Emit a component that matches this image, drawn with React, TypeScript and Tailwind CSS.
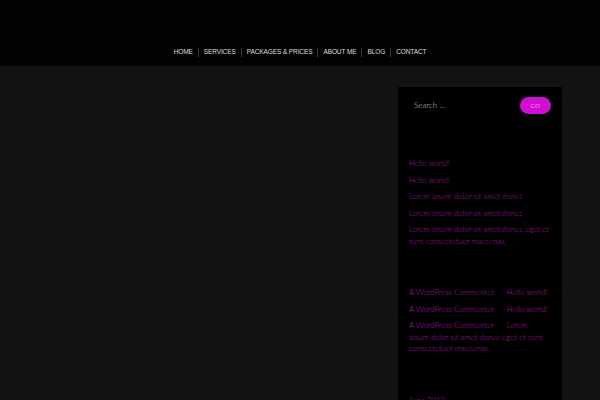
import React from "react";

const navItems = ["HOME", "SERVICES", "PACKAGES & PRICES", "ABOUT ME", "BLOG", "CONTACT"];

export default function App() {
  return (
    <div className="w-[600px] h-[400px] overflow-hidden bg-[#121212]" style={{ fontFamily: "Lato, 'Liberation Sans', sans-serif" }}>
      <header className="h-[66px] bg-[#020202] flex justify-center items-start pt-[47px]">
        <nav className="flex items-center" style={{ fontFamily: "'Liberation Sans', Arial, sans-serif" }}>
          {navItems.map((item, i) => (
            <React.Fragment key={item}>
              {i > 0 && <span className="w-px h-[9px] bg-[#3a3a3a] mx-[5px]" />}
              <span className="text-[6.5px] leading-[10px] text-[#dedede] tracking-[-0.1px]">{item}</span>
            </React.Fragment>
          ))}
        </nav>
      </header>
      <main className="flex">
        <div className="flex-1" />
        <aside className="w-[164px] mr-[38px] mt-[21px] bg-black h-[400px] pl-[11px] pr-[11px] pt-[10px] font-light">
          <div className="flex items-center justify-between">
            <span className="pl-[5px] text-[7.8px] text-[#cfcfcf] tracking-[0.1px]">Search …</span>
            <button className="w-[31px] h-[17px] rounded-full bg-[#d30ed3] text-white text-[6px] tracking-[0.5px] leading-none">GO</button>
          </div>
          <div className="mt-[44px] pr-[2px] text-[7.6px] tracking-[0.1px] text-[#b21ab2] leading-[11.5px]">
            <ul className="flex flex-col gap-[5px]">
              <li>Hello world!</li>
              <li>Hello world!</li>
              <li>Lorem ipsum dolor sit amet donec</li>
              <li>Lorem ipsum dolor sit amet donec</li>
              <li>Lorem ipsum dolor sit amet donec eget et sunt consectetuer maecenas.</li>
            </ul>
            <ul className="mt-[40px] flex flex-col gap-[5px]">
              <li>A WordPress Commenter <span className="text-black">on</span> Hello world!</li>
              <li>A WordPress Commenter <span className="text-black">on</span> Hello world!</li>
              <li>A WordPress Commenter <span className="text-black">on</span> Lorem ipsum dolor sit amet donec eget et sunt consectetuer maecenas.</li>
            </ul>
            <ul className="mt-[40px]">
              <li>June 2018</li>
            </ul>
          </div>
        </aside>
      </main>
    </div>
  );
}
